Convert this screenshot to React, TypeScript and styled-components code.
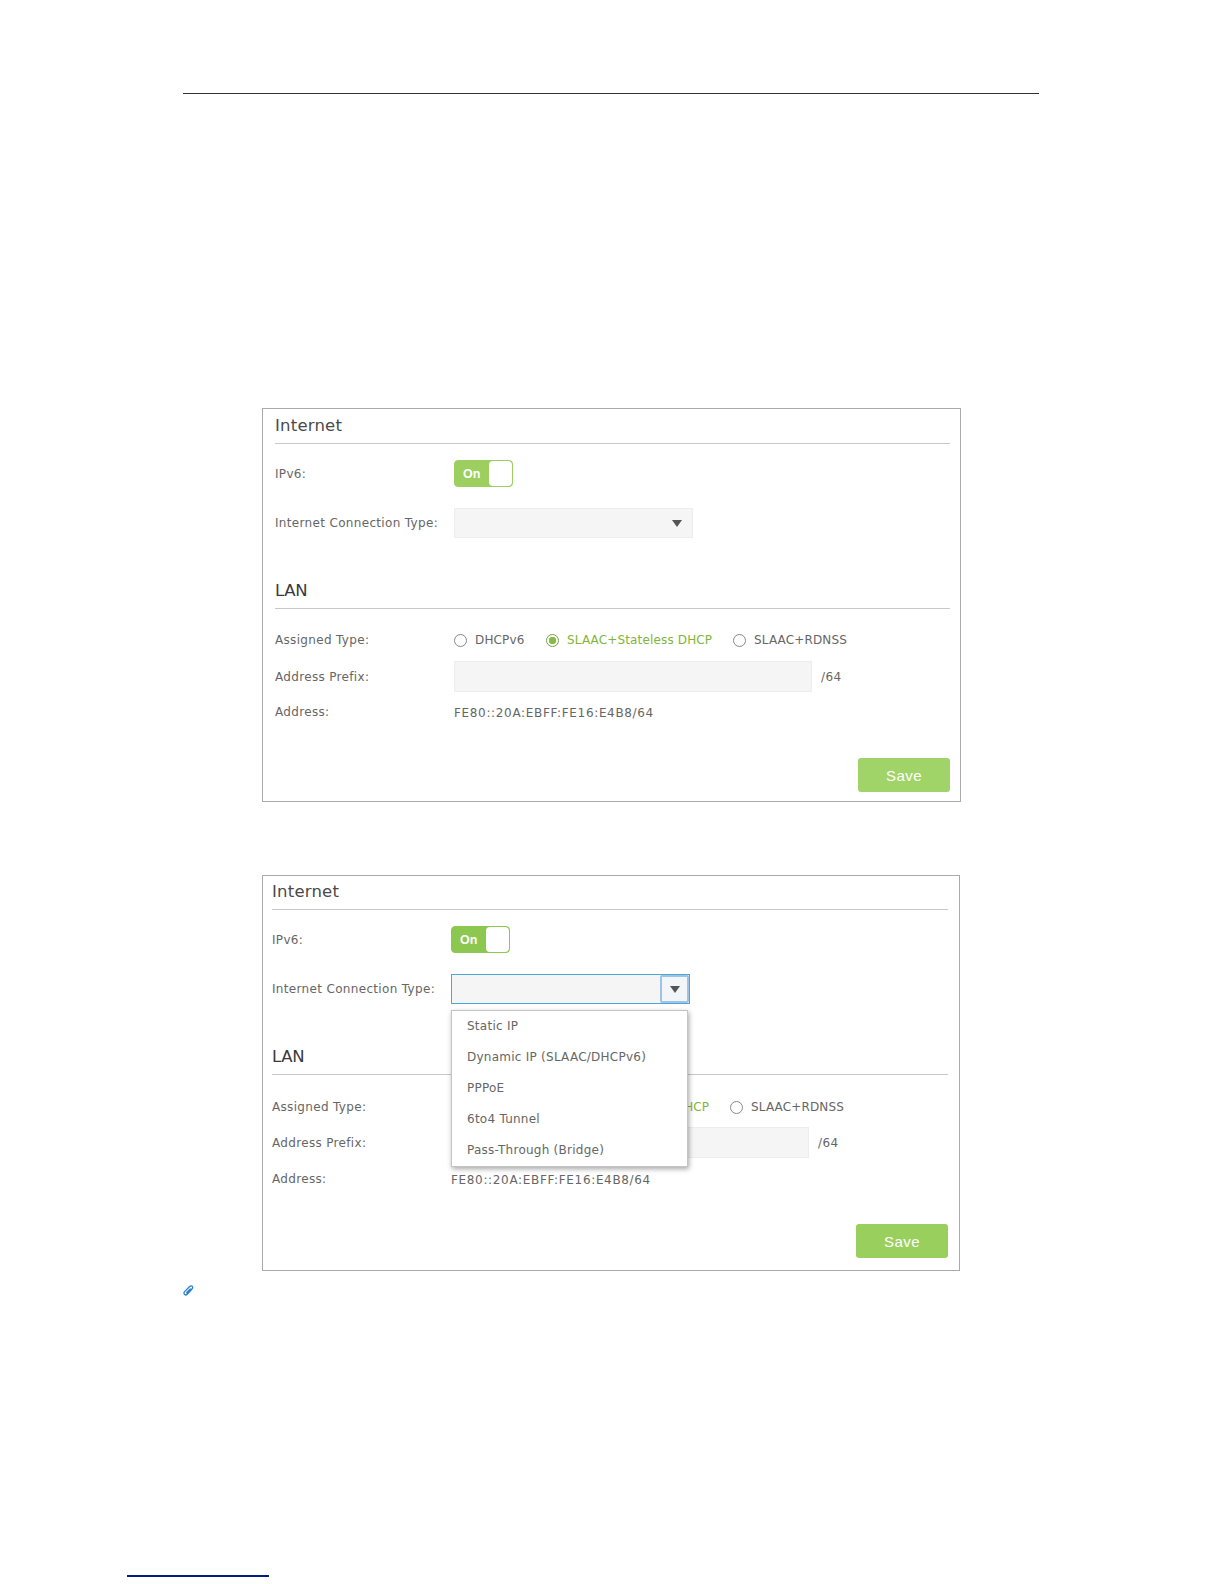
import React from "react";
import styled, { createGlobalStyle } from "styled-components";

const Global = createGlobalStyle`
  html, body { margin: 0; padding: 0; background: #fff; }
  body { font-family: "DejaVu Sans", "Liberation Sans", sans-serif; color: #666; }
`;

const Page = styled.div`
  width: 1224px;
  height: 1584px;
  overflow: hidden;
  position: relative;
  padding-top: 93px;
  box-sizing: border-box;
`;

const HeaderRule = styled.div`
  margin: 0 185px 0 183px;
  height: 1px;
  background: #333;
`;

const Panel = styled.section<{ $top: number; $width: number; $open?: boolean }>`
  position: relative;
  box-sizing: border-box;
  width: ${(p) => p.$width}px;
  margin: ${(p) => p.$top}px 0 0 262px;
  padding: 0 ${(p) => (p.$open ? 11 : 10)}px ${(p) => (p.$open ? 12 : 9)}px ${(p) => (p.$open ? 9 : 12)}px;
  border: 1px solid #aaa;
`;

const SectionTitle = styled.h2<{ $h: number; $lan?: boolean }>`
  margin: 0;
  height: ${(p) => p.$h}px;
  line-height: ${(p) => p.$h - 1}px;
  font-size: 16.5px;
  font-weight: 400;
  letter-spacing: ${(p) => (p.$lan ? "-0.3px" : "0.2px")};
  color: ${(p) => (p.$lan ? "#3a3a3a" : "#4a4a4a")};
  border-bottom: 1px solid #c8c8c8;
  box-sizing: content-box;
`;

const LanBlock = styled.div`
  margin-top: 36px;
`;

const Row = styled.div<{ $mt: number; $h: number }>`
  display: flex;
  align-items: center;
  margin-top: ${(p) => p.$mt}px;
  height: ${(p) => p.$h}px;
`;

const Label = styled.div`
  width: 179px;
  flex: none;
  font-size: 12px;
  letter-spacing: 0.33px;
  color: #666;
  white-space: nowrap;
`;

const Toggle = styled.div<{ $deep?: boolean }>`
  box-sizing: border-box;
  width: 59px;
  height: 27px;
  border: 1px solid ${(p) => (p.$deep ? "#8cc84f" : "#9ccf5f")};
  border-radius: 4px;
  background: ${(p) => (p.$deep ? "#8cc84f" : "#9ccf5f")};
  overflow: hidden;
  display: flex;
  justify-content: space-between;
`;

const ToggleLabel = styled.div`
  color: #fff;
  font-family: "Liberation Sans", sans-serif;
  font-size: 12.5px;
  font-weight: 700;
  line-height: 27px;
  padding-left: 8px;
`;

const ToggleKnob = styled.div`
  width: 23px;
  background: #fff;
  border-radius: 4px;
`;

const SelectBox = styled.div<{ $focus?: boolean }>`
  position: relative;
  box-sizing: border-box;
  width: 239px;
  height: 30px;
  background: #f5f5f5;
  border: 1px solid ${(p) => (p.$focus ? "#4da6d8" : "#ededed")};
  display: flex;
  justify-content: flex-end;
  align-items: center;
`;

const ArrowCell = styled.div<{ $focus?: boolean }>`
  box-sizing: border-box;
  width: 29px;
  height: 28px;
  display: flex;
  align-items: center;
  justify-content: center;
  ${(p) =>
    p.$focus
      ? "background:#f3f6f9; border: 2px solid #9dc3e6; border-radius: 2px;"
      : "padding-right: 1px;"}
`;

const Arrow = styled.span`
  width: 0;
  height: 0;
  border-left: 5.5px solid transparent;
  border-right: 5.5px solid transparent;
  border-top: 7px solid #555;
`;

const Menu = styled.ul`
  position: absolute;
  left: -1px;
  top: 35px;
  z-index: 2;
  box-sizing: border-box;
  width: 237px;
  height: 157px;
  margin: 0;
  padding: 0;
  list-style: none;
  background: #fff;
  border: 1px solid #c4c4c4;
  box-shadow: 1px 2px 5px rgba(0, 0, 0, 0.35);
`;

const MenuItem = styled.li`
  height: 31px;
  line-height: 30px;
  padding-left: 15px;
  font-size: 12px;
  letter-spacing: 0.25px;
  color: #666;
  white-space: nowrap;
`;

const RadioGroup = styled.div`
  display: flex;
  align-items: center;
`;

const RadioItem = styled.div<{ $on?: boolean; $w: number }>`
  display: flex;
  align-items: center;
  gap: 8px;
  width: ${(p) => p.$w}px;
  font-size: 12px;
  letter-spacing: 0.15px;
  white-space: nowrap;
  color: ${(p) => (p.$on ? "#7fb539" : "#666")};
`;

const RadioDot = styled.span<{ $on?: boolean }>`
  box-sizing: border-box;
  width: 13px;
  height: 13px;
  flex: none;
  border-radius: 50%;
  border: 1px solid ${(p) => (p.$on ? "#7a9a55" : "#888")};
  background: ${(p) => (p.$on ? "radial-gradient(circle, #86bd3f 0 3.4px, #fff 4px)" : "#fff")};
`;

const TextInput = styled.div`
  box-sizing: border-box;
  width: 358px;
  height: 31px;
  background: #f5f5f5;
  border: 1px solid #ededed;
`;

const Suffix = styled.span`
  margin-left: 9px;
  font-size: 12px;
  letter-spacing: 0.4px;
  color: #666;
`;

const Value = styled.span`
  font-size: 12px;
  letter-spacing: 0.66px;
  padding-top: 2px;
  color: #666;
  white-space: nowrap;
`;

const Footer = styled.div<{ $mt: number }>`
  display: flex;
  justify-content: flex-end;
  margin-top: ${(p) => p.$mt}px;
`;

const SaveButton = styled.button<{ $deep?: boolean }>`
  width: 92px;
  height: 34px;
  padding: 0;
  border: 0;
  border-radius: 3px;
  background: ${(p) => (p.$deep ? "#99cf5d" : "#a0d468")};
  color: #fff;
  font-family: "Liberation Sans", sans-serif;
  font-size: 15px;
  letter-spacing: 0.4px;
`;

const ClipRow = styled.div`
  margin: 14px 0 0 183px;
  height: 12px;
  display: flex;
`;

const FootnoteRule = styled.div`
  margin: 278px 0 0 127px;
  width: 142px;
  height: 2px;
  background: #0b1a80;
`;

const options = ["Static IP", "Dynamic IP (SLAAC/DHCPv6)", "PPPoE", "6to4 Tunnel", "Pass-Through (Bridge)"];

function Form({ open }: { open?: boolean }) {
  const titleH = open ? 33 : 34;
  return (
    <Panel $top={open ? 73 : 314} $width={open ? 698 : 699} $open={open}>
      <SectionTitle $h={titleH}>Internet</SectionTitle>
      <Row $mt={16} $h={27}>
        <Label>IPv6:</Label>
        <Toggle $deep={open}>
          <ToggleLabel>On</ToggleLabel>
          <ToggleKnob />
        </Toggle>
      </Row>
      <Row $mt={21} $h={30}>
        <Label>Internet Connection Type:</Label>
        <SelectBox $focus={open}>
          <ArrowCell $focus={open}>
            <Arrow />
          </ArrowCell>
          {open && (
            <Menu>
              {options.map((o) => (
                <MenuItem key={o}>{o}</MenuItem>
              ))}
            </Menu>
          )}
        </SelectBox>
      </Row>
      <LanBlock>
        <SectionTitle $h={34} $lan>
          LAN
        </SectionTitle>
      </LanBlock>
      <Row $mt={open ? 20 : 19} $h={24}>
        <Label>Assigned Type:</Label>
        <RadioGroup>
          <RadioItem $w={92}>
            <RadioDot />
            DHCPv6
          </RadioItem>
          <RadioItem $w={187} $on>
            <RadioDot $on />
            SLAAC+Stateless DHCP
          </RadioItem>
          <RadioItem $w={120}>
            <RadioDot />
            SLAAC+RDNSS
          </RadioItem>
        </RadioGroup>
      </Row>
      <Row $mt={open ? 8 : 9} $h={31}>
        <Label>Address Prefix:</Label>
        <TextInput />
        <Suffix>/64</Suffix>
      </Row>
      <Row $mt={open ? 11 : 10} $h={20}>
        <Label>Address:</Label>
        <Value>FE80::20A:EBFF:FE16:E4B8/64</Value>
      </Row>
      <Footer $mt={open ? 35 : 36}>
        <SaveButton $deep={open}>Save</SaveButton>
      </Footer>
    </Panel>
  );
}

export default function App() {
  return (
    <Page>
      <Global />
      <HeaderRule />
      <Form />
      <Form open />
      <ClipRow>
        <svg width="11" height="11" viewBox="0 0 11 11" fill="none" stroke="#2a7fd0" strokeWidth="1.3">
          <path d="M3.2 9.6 L9 4 C10.2 2.7 9.6 1 8.4 0.9 C7.6 0.8 7 1.2 6.4 1.8 L1.6 6.6 C0.6 7.7 0.9 9 1.7 9.6 C2.5 10.2 3.5 9.9 4.2 9.2 L8 5.4 C8.6 4.7 8 3.7 7.1 4.2 L3.4 7.8" />
        </svg>
      </ClipRow>
      <FootnoteRule />
    </Page>
  );
}
